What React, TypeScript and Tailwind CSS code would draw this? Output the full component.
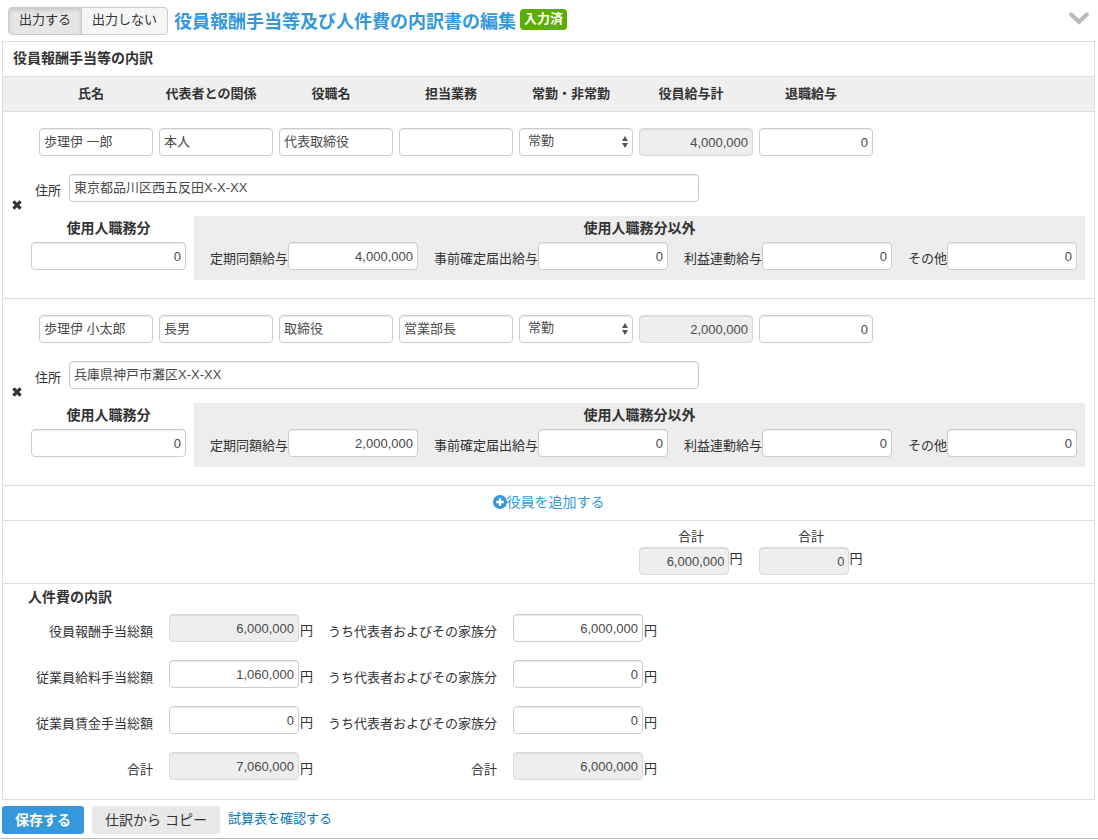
import { useId } from "react";
import type { ReactNode } from "react";

const fieldBase =
  "block h-7 min-w-0 rounded border px-1 text-[13px] leading-5 shadow-[inset_0_1px_1px_rgba(0,0,0,0.075)] outline-none";
const editable = "border-[#cccccc] bg-white text-[#4a4a4a]";
const locked = "border-[#d8d8d8] bg-[#eeeeee] text-[#4a4a4a]";

type FieldProps = {
  value: string;
  width: string;
  label?: string;
  id?: string;
  numeric?: boolean;
  readOnly?: boolean;
};

function Field({ value, width, label, id, numeric, readOnly }: FieldProps) {
  return (
    <input
      id={id}
      type="text"
      aria-label={label}
      defaultValue={value}
      readOnly={readOnly}
      className={`${fieldBase} ${width} ${readOnly ? locked : editable} ${numeric ? "text-right" : "pb-1"}`}
    />
  );
}

type Officer = {
  name: string;
  relation: string;
  title: string;
  duty: string;
  pay: string;
  address: string;
};

const officers: Officer[] = [
  {
    name: "歩理伊 一郎",
    relation: "本人",
    title: "代表取締役",
    duty: "",
    pay: "4,000,000",
    address: "東京都品川区西五反田X-X-XX",
  },
  {
    name: "歩理伊 小太郎",
    relation: "長男",
    title: "取締役",
    duty: "営業部長",
    pay: "2,000,000",
    address: "兵庫県神戸市灘区X-X-XX",
  },
];

const columns = ["氏名", "代表者との関係", "役職名", "担当業務", "常勤・非常勤", "役員給与計", "退職給与"];

function Cell({ children }: { children: ReactNode }) {
  return <td className="pt-4 pl-2">{children}</td>;
}

function PayField({ label, value }: { label: string; value: string }) {
  const id = useId();
  return (
    <div className="flex">
      <label htmlFor={id} className="pt-[7px] whitespace-nowrap">
        {label}
      </label>
      <Field id={id} value={value} width="w-[130px]" numeric />
    </div>
  );
}

function OfficerRows({ officer }: { officer: Officer }) {
  const addressId = useId();
  const employeeId = useId();
  return (
    <tbody className="border-b border-[#dddddd]">
      <tr>
        <td rowSpan={2} className="align-middle">
          <button type="button" aria-label="削除" className="mx-auto block">
            <svg viewBox="0 0 10 10" className="size-[10px]" fill="none" stroke="#333333" strokeWidth="3.2">
              <path d="M1.4 1.4 8.6 8.6M8.6 1.4 1.4 8.6" />
            </svg>
          </button>
        </td>
        <Cell>
          <Field label={columns[0]} value={officer.name} width="w-[114px]" />
        </Cell>
        <Cell>
          <Field label={columns[1]} value={officer.relation} width="w-[114px]" />
        </Cell>
        <Cell>
          <Field label={columns[2]} value={officer.title} width="w-[114px]" />
        </Cell>
        <Cell>
          <Field label={columns[3]} value={officer.duty} width="w-[114px]" />
        </Cell>
        <Cell>
          <div className="relative w-[114px]">
            <select
              aria-label={columns[4]}
              defaultValue="常勤"
              className={`${fieldBase} ${editable} w-full appearance-none pb-0.5 pl-2`}
            >
              <option>常勤</option>
              <option>非常勤</option>
            </select>
            <svg
              viewBox="0 0 6 12"
              className="pointer-events-none absolute top-2 right-[5px] h-3 w-1.5"
              fill="#555555"
            >
              <path d="M3 0 6 5H0zM3 12 0 7h6z" />
            </svg>
          </div>
        </Cell>
        <Cell>
          <Field label={columns[5]} value={officer.pay} width="w-[114px]" numeric readOnly />
        </Cell>
        <Cell>
          <Field label={columns[6]} value="0" width="w-[114px]" numeric />
        </Cell>
        <td />
      </tr>
      <tr>
        <td colSpan={8} className="pt-[18px] pb-[18px]">
          <div className="flex gap-2 pl-1">
            <label htmlFor={addressId} className="pt-[7px]">
              住所
            </label>
            <Field id={addressId} value={officer.address} width="w-[630px]" />
          </div>
          <div className="mt-3.5 flex gap-2 pr-[9px]">
            <div className="w-[155px] pt-0.5">
              <label htmlFor={employeeId} className="block h-6 text-center text-sm leading-5 font-bold">
                使用人職務分
              </label>
              <Field id={employeeId} value="0" width="w-full" numeric />
            </div>
            <div className="flex-1 bg-[#ededed] px-2 pt-0.5 pb-2.5">
              <div className="h-6 text-center text-sm leading-5 font-bold">使用人職務分以外</div>
              <div className="flex gap-4 pl-2">
                <PayField label="定期同額給与" value={officer.pay} />
                <PayField label="事前確定届出給与" value="0" />
                <PayField label="利益連動給与" value="0" />
                <PayField label="その他" value="0" />
              </div>
            </div>
          </div>
        </td>
      </tr>
    </tbody>
  );
}

function Total({ value }: { value: string }) {
  const id = useId();
  return (
    <td className="pt-1.5 pb-2">
      <label htmlFor={id} className="block text-center">
        合計
      </label>
      <div className="flex justify-center">
        <Field id={id} value={value} width="w-[90px]" numeric readOnly />
        <span className="pt-0.5">円</span>
      </div>
    </td>
  );
}

type Amount = { label: string; value: string; readOnly?: boolean };

const costs: [Amount, Amount][] = [
  [
    { label: "役員報酬手当総額", value: "6,000,000", readOnly: true },
    { label: "うち代表者およびその家族分", value: "6,000,000" },
  ],
  [
    { label: "従業員給料手当総額", value: "1,060,000" },
    { label: "うち代表者およびその家族分", value: "0" },
  ],
  [
    { label: "従業員賃金手当総額", value: "0" },
    { label: "うち代表者およびその家族分", value: "0" },
  ],
  [
    { label: "合計", value: "7,060,000", readOnly: true },
    { label: "合計", value: "6,000,000", readOnly: true },
  ],
];

function CostField({ amount, labelWidth }: { amount: Amount; labelWidth: string }) {
  const id = useId();
  return (
    <div className="flex">
      <label htmlFor={id} className={`${labelWidth} pt-2 text-right whitespace-nowrap`}>
        {amount.label}
      </label>
      <div className="ml-4 flex gap-px">
        <Field id={id} value={amount.value} width="w-[130px]" numeric readOnly={amount.readOnly} />
        <span className="pt-[7px]">円</span>
      </div>
    </div>
  );
}

export default function App() {
  return (
    <div className="border-b border-[#bbbbbb] bg-white pb-1 font-['Liberation_Sans','Noto_Sans_CJK_JP',sans-serif] text-[13px] leading-5 text-[#333333]">
      <header className="flex items-start pt-[7px] pr-2 pb-1.5 pl-2">
        <div className="flex h-7 rounded border border-[#cccccc] bg-[#f5f5f5]">
          <button
            type="button"
            aria-pressed="true"
            className="rounded-l-[3px] border-r border-[#cccccc] bg-[#e6e6e6] px-2.5 pb-0.5 shadow-[inset_0_2px_4px_rgba(0,0,0,0.15)]"
          >
            出力する
          </button>
          <button type="button" aria-pressed="false" className="px-2.5 pb-0.5">
            出力しない
          </button>
        </div>
        <h1 className="ml-1.5 h-7 text-lg leading-[30px] font-bold text-[#3498db]">
          役員報酬手当等及び人件費の内訳書の編集
        </h1>
        <span className="mt-0.5 ml-1 h-[21px] rounded bg-[#5cad00] px-1 font-bold text-white">入力済</span>
        <button type="button" aria-label="開閉" className="mt-1 ml-auto">
          <svg viewBox="0 0 22 14" className="h-3.5 w-[22px]" fill="none" stroke="#bbbbbb" strokeWidth="4.2">
            <path d="M3.2 3.4 11 10.8 18.8 3.4" strokeLinecap="round" />
          </svg>
        </button>
      </header>

      <main className="mr-[3px] ml-0.5 border border-[#dddddd]">
        <h2 className="pt-1.5 pb-2 pl-2.5 text-sm leading-5 font-bold">役員報酬手当等の内訳</h2>
        <table className="w-full table-fixed border-collapse border-t border-[#dddddd]">
          <colgroup>
            <col className="w-7" />
            <col className="w-[120px]" />
            <col className="w-[120px]" />
            <col className="w-[120px]" />
            <col className="w-[120px]" />
            <col className="w-[120px]" />
            <col className="w-[120px]" />
            <col className="w-[120px]" />
            <col />
          </colgroup>
          <thead className="border-b border-[#dddddd] bg-[#efefef]">
            <tr className="h-[35px]">
              <td />
              {columns.map((column) => (
                <th key={column} scope="col" className="font-bold">
                  {column}
                </th>
              ))}
              <td />
            </tr>
          </thead>
          {officers.map((officer) => (
            <OfficerRows key={officer.name} officer={officer} />
          ))}
          <tbody className="border-b border-[#dddddd]">
            <tr className="h-[35px]">
              <td colSpan={9} className="text-center">
                <button type="button" className="inline-flex items-center text-sm leading-5 text-[#3498db]">
                  <svg viewBox="0 0 14 14" className="size-3.5">
                    <circle cx="7" cy="7" r="7" fill="#3498db" />
                    <path d="M7 3.2v7.6M3.2 7h7.6" stroke="#ffffff" strokeWidth="2.4" />
                  </svg>
                  役員を追加する
                </button>
              </td>
            </tr>
          </tbody>
          <tbody className="border-b border-[#dddddd]">
            <tr>
              <td colSpan={6} />
              <Total value="6,000,000" />
              <Total value="0" />
              <td />
            </tr>
          </tbody>
        </table>

        <section className="pb-[19px]">
          <h2 className="pt-[3px] pb-[7px] pl-[25px] text-sm leading-5 font-bold">人件費の内訳</h2>
          <div className="flex flex-col gap-[18px]">
            {costs.map(([total, family], index) => (
              <div key={index} className="flex">
                <CostField amount={total} labelWidth="w-[150px]" />
                <CostField amount={family} labelWidth="w-[184px]" />
              </div>
            ))}
          </div>
        </section>
      </main>

      <footer className="mt-1.5 ml-0.5 flex items-start gap-2">
        <button type="button" className="h-7 rounded-[3px] bg-[#3498db] px-[13px] text-sm font-bold text-white">
          保存する
        </button>
        <button type="button" className="h-7 rounded-[3px] bg-[#e8e8e8] px-[13px] text-sm">
          仕訳から コピー
        </button>
        <a href="#trial-balance" className="pt-[3px] text-[#0077bb]">
          試算表を確認する
        </a>
      </footer>
    </div>
  );
}
